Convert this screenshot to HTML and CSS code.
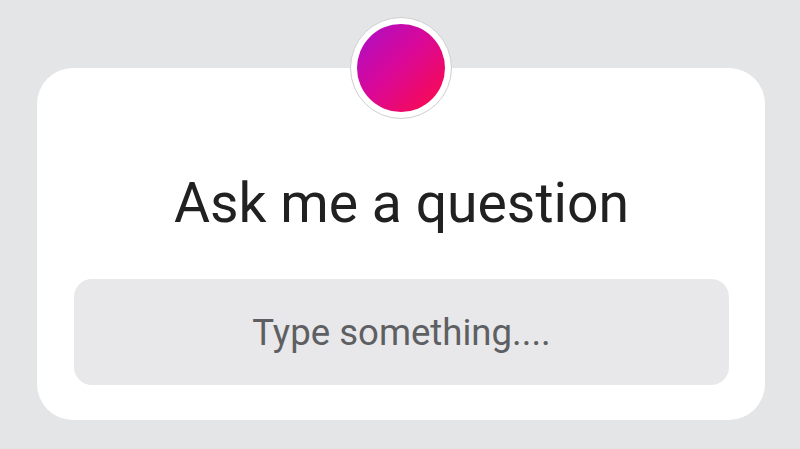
FILE: index.html
```html
<!DOCTYPE html>
<html>
<head>
<meta charset="utf-8">
<link rel="stylesheet" href="styles.css">
</head>
<body>
<div class="card">
  <div class="avatar"><div class="avatar-inner"></div></div>
  <h1 class="title">Ask me a question</h1>
  <div class="field">Type something....</div>
</div>
</body>
</html>
```
FILE: styles.css
```css
html, body {
  margin: 0;
  padding: 0;
  background: #e4e5e7;
  width: 800px;
  height: 449px;
  overflow: hidden;
  font-family: Roboto, "Liberation Sans", sans-serif;
}
.card {
  position: relative;
  box-sizing: border-box;
  margin: 68px 0 0 37px;
  width: 728px;
  height: 352px;
  background: #ffffff;
  border-radius: 36px;
  padding: 0 36px 35px 37px;
  display: flex;
  flex-direction: column;
}
.avatar {
  position: absolute;
  left: 313px;
  top: -51px;
  width: 102px;
  height: 102px;
  box-sizing: border-box;
  border-radius: 50%;
  background: #fff;
  border: 1px solid #cfcfd2;
  display: flex;
  align-items: center;
  justify-content: center;
}
.avatar-inner {
  width: 88px;
  height: 88px;
  border-radius: 50%;
  background: linear-gradient(135deg, #a90fc8 0%, #d8089a 45%, #ff0a45 100%);
}
.title {
  margin: 104px 0 0;
  font-weight: 400;
  font-size: 55.3px;
  line-height: 64px;
  color: #212121;
  text-align: center;
}
.field {
  margin-top: 43px;
  height: 106px;
  box-sizing: border-box;
  padding-top: 2px;
  border-radius: 18px;
  background: #e8e8ea;
  color: #5e5f62;
  font-size: 36.6px;
  line-height: 104px;
  text-align: center;
}
```
